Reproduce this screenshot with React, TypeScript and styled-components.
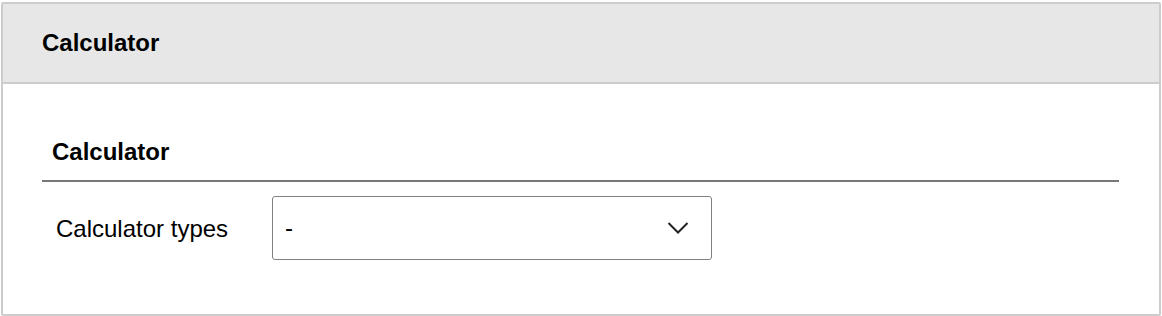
import React from "react";
import styled, { createGlobalStyle } from "styled-components";

const Global = createGlobalStyle`
  html, body { margin: 0; padding: 0; background: #fff; }
  body { font-family: "Liberation Sans", Arial, sans-serif; color: #000; }
`;

const Page = styled.div`
  padding: 2px 0 0 1px;
  width: 1161px;
  box-sizing: border-box;
`;

const Panel = styled.section`
  border: 2px solid #cccccc;
  border-radius: 2px;
  box-sizing: border-box;
  height: 314px;
  display: flex;
  flex-direction: column;
`;

const Header = styled.header`
  background: #e6e7e6;
  border-bottom: 2px solid #cccccc;
  height: 80px;
  box-sizing: border-box;
  display: flex;
  align-items: center;
  padding-left: 39px;
  padding-bottom: 1px;
  font-size: 24px;
  line-height: 28px;
  font-weight: 700;
`;

const Body = styled.div`
  padding: 55px 40px 0 39px;
`;

const SectionTitle = styled.h2`
  margin: 0;
  padding: 0 0 0 10px;
  font-size: 24px;
  font-weight: 700;
  line-height: 26px;
  height: 41px;
  border-bottom: 2px solid #777777;
`;

const Row = styled.div`
  display: flex;
  align-items: center;
  margin-top: 14px;
  padding-left: 14px;
`;

const Label = styled.label`
  font-size: 24px;
  line-height: 28px;
  width: 216px;
  padding-top: 1px;
`;

const Select = styled.div`
  width: 440px;
  height: 64px;
  box-sizing: border-box;
  border: 1px solid #808080;
  border-radius: 3px;
  display: flex;
  align-items: center;
  justify-content: space-between;
  padding: 0 22px 0 12px;
  font-size: 24px;
  line-height: 28px;
`;

export default function App() {
  return (
    <>
      <Global />
      <Page>
        <Panel>
          <Header>Calculator</Header>
          <Body>
            <SectionTitle>Calculator</SectionTitle>
            <Row>
              <Label>Calculator types</Label>
              <Select>
                <span>-</span>
                <svg width="22" height="14" viewBox="0 0 22 14" fill="none">
                  <path d="M1.5 2 L11 11.5 L20.5 2" stroke="#222" strokeWidth="2" />
                </svg>
              </Select>
            </Row>
          </Body>
        </Panel>
      </Page>
    </>
  );
}
